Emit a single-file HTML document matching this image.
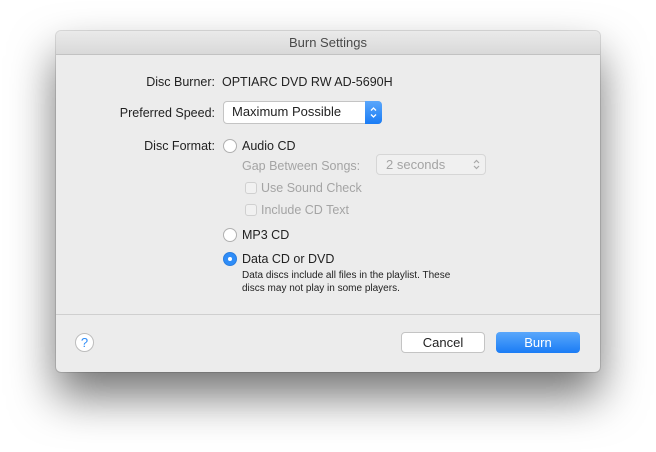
<!DOCTYPE html>
<html><head><style>
body{margin:0;width:656px;height:452px;background:#fff;font-family:"Liberation Sans",sans-serif;font-size:12.5px;color:#222;position:relative;overflow:hidden}
.win{position:absolute;left:56px;top:31px;width:544px;height:341px;background:#ececec;border-radius:5px;box-shadow:0 24px 45px rgba(0,0,0,0.55),0 0 0 1px rgba(0,0,0,0.12)}
.title{position:absolute;left:0;top:0;width:544px;height:23px;background:linear-gradient(#eaeaea,#d9d9d9);border-bottom:1px solid #c2c2c2;border-radius:5px 5px 0 0;text-align:center;line-height:24px;color:#4a4a4a;font-size:13px}
.t{position:absolute;white-space:nowrap}
.r{text-align:right}
.gray{color:#a4a4a4}
.radio{position:absolute;width:14px;height:14px;border-radius:50%;background:#fff;border:1px solid #b0b0b0;box-sizing:border-box}
.radio.on{background:#2f8df8;border-color:#2a7ee0}
.radio.on:after{content:"";position:absolute;left:4px;top:4px;width:4px;height:4px;border-radius:50%;background:#fff}
.cb{position:absolute;width:12px;height:12px;border:1px solid #d0d0d0;border-radius:3px;background:#f1f1f1;box-sizing:border-box}
.btn{position:absolute;box-sizing:border-box;border-radius:4px;text-align:center;font-size:13px}
</style></head><body>
<div class="win">
<div class="title">Burn Settings</div>
<div class="t r" style="right:385px;top:44px">Disc Burner:</div>
<div class="t" style="left:166px;top:44px">OPTIARC DVD RW AD-5690H</div>
<div class="t r" style="right:385px;top:75px">Preferred Speed:</div>
<div class="btn" style="left:167px;top:70px;width:159px;height:23px;background:#fff;border:1px solid #c4c4c4;text-align:left;padding-left:8px;line-height:20px">Maximum Possible
<div style="position:absolute;right:-1px;top:-1px;width:17px;height:23px;background:linear-gradient(#5aa7fb,#1a7cf5);border-radius:0 4px 4px 0">
<svg width="17" height="23" viewBox="0 0 17 23"><path d="M6 9.5L8.5 7L11 9.5M6 13.5L8.5 16L11 13.5" stroke="#fff" stroke-width="1.3" fill="none"/></svg></div></div>
<div class="t r" style="right:385px;top:108px">Disc Format:</div>
<div class="radio" style="left:167px;top:108px"></div>
<div class="t" style="left:186px;top:108px">Audio CD</div>
<div class="t gray" style="left:186px;top:128px">Gap Between Songs:</div>
<div class="btn" style="left:320px;top:123px;width:110px;height:21px;border:1px solid #d6d6d6;background:#f0f0f0;text-align:left;padding-left:9px;line-height:19px;color:#a4a4a4">2 seconds
<svg style="position:absolute;right:4px;top:3px" width="9" height="13" viewBox="0 0 9 13"><path d="M2 5L4.5 2.5L7 5M2 8L4.5 10.5L7 8" stroke="#a8a8a8" stroke-width="1.2" fill="none"/></svg></div>
<div class="cb" style="left:189px;top:151px"></div>
<div class="t gray" style="left:205px;top:150px">Use Sound Check</div>
<div class="cb" style="left:189px;top:173px"></div>
<div class="t gray" style="left:205px;top:172px">Include CD Text</div>
<div class="radio" style="left:167px;top:197px"></div>
<div class="t" style="left:186px;top:197px">MP3 CD</div>
<div class="radio on" style="left:167px;top:221px"></div>
<div class="t" style="left:186px;top:221px">Data CD or DVD</div>
<div class="t" style="left:186px;top:238px;font-size:10px;line-height:13px">Data discs include all files in the playlist. These<br>discs may not play in some players.</div>
<div style="position:absolute;left:0;top:283px;width:544px;height:1px;background:#cfcfcf"></div>
<div style="position:absolute;left:19px;top:302px;width:19px;height:19px;border-radius:50%;background:#fff;border:1px solid #bdbdbd;box-sizing:border-box;color:#2f8df8;text-align:center;line-height:17px;font-size:13px">?</div>
<div class="btn" style="left:345px;top:301px;width:84px;height:21px;background:#fff;border:1px solid #c4c4c4;line-height:19px">Cancel</div>
<div class="btn" style="left:440px;top:301px;width:84px;height:21px;background:linear-gradient(#5aa7fb,#1a7cf5);color:#fff;line-height:21px">Burn</div>
</div>
</body></html>
